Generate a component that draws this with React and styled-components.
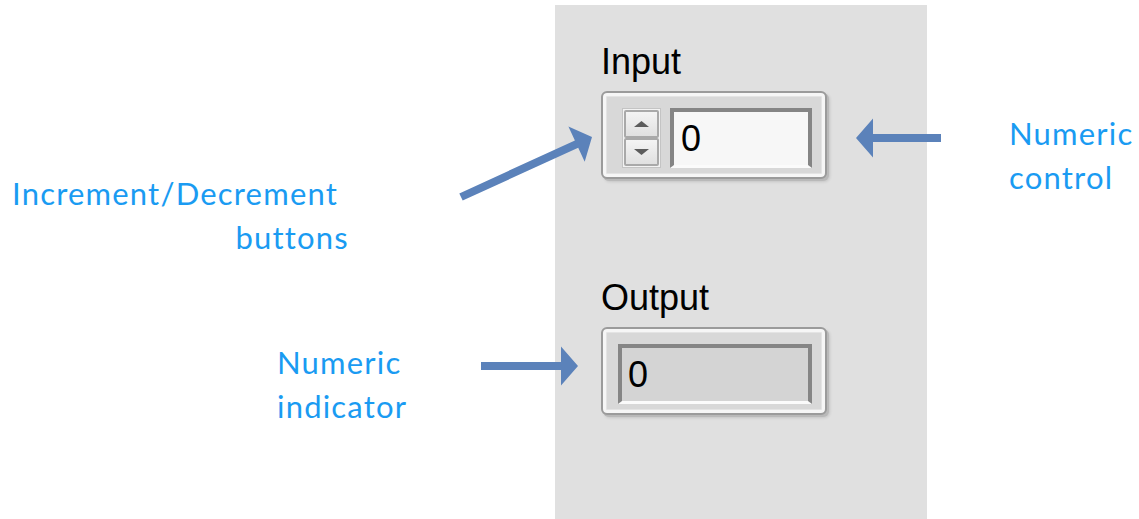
import React from "react";
import styled, { createGlobalStyle } from "styled-components";

const Global = createGlobalStyle`
  html, body { margin: 0; padding: 0; background: #fff; }
  #root { width: 1139px; height: 519px; }
`;

const Page = styled.div`
  position: relative;
  width: 1139px;
  height: 519px;
  display: flex;
  background: #fff;
  overflow: hidden;
`;

const SideCol = styled.div`
  flex: ${(p) => (p.$grow ? "1 1 auto" : "none")};
  width: ${(p) => (p.$width ? `${p.$width}px` : "auto")};
  display: flex;
  flex-direction: column;
`;

const Anno = styled.div`
  font-family: Lato, "Open Sans", sans-serif;
  font-size: 31px;
  letter-spacing: 1.2px;
  line-height: 44px;
  color: #1a9bf2;
  margin-top: ${(p) => p.$top}px;
  margin-left: ${(p) => p.$left}px;
  width: ${(p) => (p.$width ? `${p.$width}px` : "auto")};
  text-align: ${(p) => p.$align || "left"};
  white-space: nowrap;
`;

const AnnoLine = styled.span`
  display: block;
  padding-right: ${(p) => p.$pr || 0}px;
`;

const Panel = styled.div`
  flex: none;
  width: 372px;
  height: 514px;
  margin-top: 5px;
  background: #e0e0e0;
  box-sizing: border-box;
  padding: 37px 0 0 46px;
  display: flex;
  flex-direction: column;
`;

const Group = styled.div`
  display: flex;
  flex-direction: column;
  gap: 9px;
  margin-top: ${(p) => p.$top || 0}px;
`;

const Label = styled.div`
  font-family: "Liberation Sans", Arial, sans-serif;
  font-size: 36px;
  line-height: 40px;
  color: #000;
`;

const Frame = styled.div`
  width: 226px;
  height: 88px;
  box-sizing: border-box;
  border: 2px solid #9b9b9b;
  border-radius: 6px;
  background: #d8d8d8;
  padding: ${(p) => p.$pad};
  display: flex;
  gap: 9px;
  box-shadow: inset 0 0 0 3px #f6f6f6, inset 0 0 0 4px #e4e4e4,
    2px 2px 0 #b9b9b9, 3px 3px 3px rgba(0, 0, 0, 0.12);
`;

const Spinner = styled.div`
  width: 39px;
  flex: none;
  display: flex;
  flex-direction: column;
  box-sizing: border-box;
  border: 1px solid #c4c4c4;
  background: #f3f3f3;
  padding: 1px;
`;

const SpinButton = styled.div`
  flex: 1;
  box-sizing: border-box;
  border: 2px solid #a9a9a9;
  border-radius: 2px;
  background: linear-gradient(#f4f4f4, #e0e0e0);
  display: flex;
  align-items: center;
  justify-content: center;
`;

const Field = styled.div`
  flex: 1;
  box-sizing: border-box;
  border: 4px solid #858585;
  border-bottom: 3px solid #fbfbfb;
  background: ${(p) => (p.$indicator ? "#d4d4d4" : "#f7f7f7")};
  display: flex;
  align-items: center;
  padding-left: ${(p) => (p.$indicator ? 6 : 7)}px;
  font-family: "Liberation Sans", Arial, sans-serif;
  font-size: 36px;
  color: #000;
`;

const Overlay = styled.svg`
  position: absolute;
  left: 0;
  top: 0;
  pointer-events: none;
`;

function arrowPoints(x1, y1, x2, y2, shaft = 8, headW = 39, headL = 17) {
  const dx = x2 - x1;
  const dy = y2 - y1;
  const len = Math.hypot(dx, dy);
  const ux = dx / len;
  const uy = dy / len;
  const nx = -uy;
  const ny = ux;
  const bx = x2 - ux * headL;
  const by = y2 - uy * headL;
  const s = shaft / 2;
  const h = headW / 2;
  const pts = [
    [x1 + nx * s, y1 + ny * s],
    [bx + nx * s, by + ny * s],
    [bx + nx * h, by + ny * h],
    [x2, y2],
    [bx - nx * h, by - ny * h],
    [bx - nx * s, by - ny * s],
    [x1 - nx * s, y1 - ny * s],
  ];
  return pts.map((p) => p.map((v) => v.toFixed(1)).join(",")).join(" ");
}

const Arrow = ({ from, to }) => (
  <polygon points={arrowPoints(from[0], from[1], to[0], to[1])} fill="#5b82ba" />
);

const Tri = ({ up }) => (
  <svg width="15" height="7" viewBox="0 0 15 7">
    {up ? (
      <polygon points="7.5,0 15,6 0,6" fill="#5c5c5c" />
    ) : (
      <polygon points="0,0 15,0 7.5,6" fill="#5c5c5c" />
    )}
  </svg>
);

export default function App() {
  return (
    <>
      <Global />
      <Page>
        <SideCol $width={555}>
          <Anno $top={171} $left={12} $width={337} $align="right">
            <AnnoLine $pr={11}>Increment/Decrement</AnnoLine>
            <AnnoLine>buttons</AnnoLine>
          </Anno>
          <Anno $top={81} $left={277}>
            <AnnoLine>Numeric</AnnoLine>
            <AnnoLine>indicator</AnnoLine>
          </Anno>
        </SideCol>
        <Panel>
          <Group>
            <Label>Input</Label>
            <Frame $pad="15px 13px 9px 19px">
              <Spinner>
                <SpinButton>
                  <Tri up />
                </SpinButton>
                <SpinButton>
                  <Tri />
                </SpinButton>
              </Spinner>
              <Field>0</Field>
            </Frame>
          </Group>
          <Group $top={99}>
            <Label>Output</Label>
            <Frame $pad="15px 13px 9px 15px">
              <Field $indicator>0</Field>
            </Frame>
          </Group>
        </Panel>
        <SideCol $grow>
          <Anno $top={111} $left={82}>
            <AnnoLine>Numeric</AnnoLine>
            <AnnoLine>control</AnnoLine>
          </Anno>
        </SideCol>
        <Overlay width="1139" height="519" viewBox="0 0 1139 519">
          <Arrow from={[461, 197]} to={[592, 137]} />
          <Arrow from={[941, 138]} to={[856, 138]} />
          <Arrow from={[481, 366]} to={[578, 366]} />
        </Overlay>
      </Page>
    </>
  );
}
